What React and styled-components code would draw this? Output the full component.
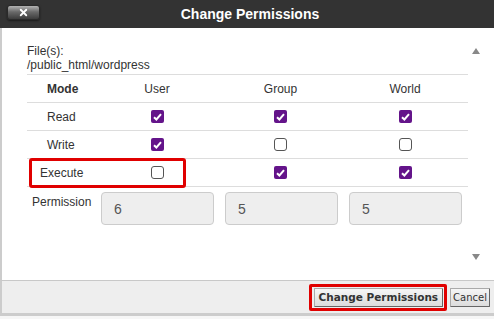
import React from 'react';
import styled, { createGlobalStyle } from 'styled-components';
import { X } from 'lucide-react';

const GlobalStyle = createGlobalStyle`
    body {
        margin: 0;
        background: #f6f6f6;
        font-family: "Liberation Sans", Arial, sans-serif;
    }
`;

// Whole dialog window
const Dialog = styled.div`
    width: 494px;
    height: 316px;
    display: flex;
    flex-direction: column;
`;

// Dark title bar
const TitleBar = styled.div`
    height: 28px;
    flex: 0 0 28px;
    background: #333;
    display: grid;
    grid-template-columns: 1fr auto 1fr;
    align-items: center;
`;

const CloseButton = styled.button`
    justify-self: start;
    margin: 0 0 4px 7px;
    width: 33px;
    height: 15px;
    padding: 0;
    border: 1px solid #2a2a2a;
    border-radius: 3px;
    background: linear-gradient(#b4b4b4, #6a6a6a 45%, #3c3c3c);
    box-shadow: 0 1px 2px rgba(0, 0, 0, 0.5);
    display: flex;
    align-items: center;
    justify-content: center;
    color: #fff;
`;

const Title = styled.h1`
    margin: 0 0 0 6px;
    font-size: 14px;
    font-weight: bold;
    color: #fff;
    font-family: "Liberation Sans", Arial, sans-serif;
`;

// White scrolling body
const Body = styled.div`
    flex: 1;
    display: flex;
    background: #fff;
    border-left: 2px solid #ccc;
`;

const Content = styled.div`
    width: 441px;
    padding: 16px 0 0 25px;
    color: #333;
    font-size: 12px;
`;

const FileLine = styled.div`
    line-height: 14px;
`;

const Scroller = styled.div`
    flex: 1;
    display: flex;
    flex-direction: column;
    justify-content: space-between;
    padding: 20px 0 20px 4px;
`;

const Arrow = styled.span`
    width: 0;
    height: 0;
    border-left: 4.5px solid transparent;
    border-right: 4.5px solid transparent;
    ${(p) => (p.$down ? 'border-top: 6px solid #888;' : 'border-bottom: 6px solid #888;')}
`;

// Permission table
const Table = styled.div`
    margin-top: 2px;
    border-top: 1px solid #ddd;
`;

const Row = styled.div`
    position: relative;
    display: grid;
    grid-template-columns: 68px 124px 123px 126px;
    height: 27px;
    align-items: center;
    border-bottom: 1px solid #ddd;
`;

const Label = styled.div`
    padding-left: ${(p) => p.$indent || 20}px;
    font-weight: ${(p) => (p.$bold ? 'bold' : 'normal')};
`;

const Cell = styled.div`
    display: flex;
    justify-content: center;
`;

const Box = styled.span`
    width: 13px;
    height: 13px;
    box-sizing: border-box;
    border-radius: ${(p) => (p.$checked ? '2px' : '3px')};
    background: ${(p) => (p.$checked ? '#64148a' : '#fff')};
    border: ${(p) => (p.$checked ? 'none' : '1px solid #555')};
    display: flex;
    align-items: center;
    justify-content: center;
`;

// Red annotation frame
const Highlight = styled.span`
    position: absolute;
    left: 2px;
    top: -1px;
    width: 157px;
    height: 30px;
    box-sizing: border-box;
    border: 3px solid #e00000;
    border-radius: 3px;
    pointer-events: none;
`;

const PermRow = styled.div`
    display: grid;
    grid-template-columns: 63px repeat(3, 113px);
    column-gap: 11px;
    margin-top: 5px;
`;

const PermLabel = styled.div`
    padding: 3px 0 0 5px;
`;

const PermInput = styled.input`
    height: 33px;
    box-sizing: border-box;
    width: 100%;
    padding: 0 0 0 12px;
    background: #eee;
    border: 1px solid #ccc;
    border-radius: 4px;
    font-family: "Liberation Sans", Arial, sans-serif;
    font-size: 14px;
    color: #555;
    outline: none;
`;

// Button bar at the bottom
const Footer = styled.div`
    height: 32px;
    display: flex;
    justify-content: flex-end;
    align-items: center;
    gap: 3px;
    padding-right: 4px;
    background: #eee;
    border-left: 2px solid #ccc;
    border-top: 1px solid #c8c8c8;
    border-bottom: 3px solid #ccc;
`;

const Marked = styled.span`
    display: flex;
    padding: 1px 1px 1px 2px;
    border: 3px solid #e00000;
    border-radius: 2px;
`;

const Button = styled.button`
    height: 19px;
    padding: 0 ${(p) => (p.$primary ? 4 : 2)}px;
    font-family: "DejaVu Sans", Verdana, sans-serif;
    font-size: ${(p) => (p.$primary ? 10.5 : 10)}px;
    font-weight: ${(p) => (p.$primary ? 'bold' : 'normal')};
    color: #333;
    background: linear-gradient(#f6f6f6, #dcdcdc);
    border: 1px solid #aaa;
    border-right-color: #666;
    border-bottom-color: #666;
    border-radius: 1px;
`;

const Check = () => (
    <svg width="9" height="8" viewBox="0 0 9 8">
        <path d="M1 4.2 L3.4 6.5 L8 1.2" fill="none" stroke="#fff" strokeWidth="2" />
    </svg>
);

const rows = [
    { name: 'Read', perms: [true, true, true] },
    { name: 'Write', perms: [true, false, false] },
    { name: 'Execute', perms: [false, true, true], marked: true },
];

function App() {
    return (
        <Dialog>
            <GlobalStyle />
            <TitleBar>
                <CloseButton aria-label="close"><X size={11} strokeWidth={4} /></CloseButton>
                <Title>Change Permissions</Title>
            </TitleBar>
            <Body>
                <Content>
                    <FileLine>File(s):</FileLine>
                    <FileLine>/public_html/wordpress</FileLine>
                    <Table>
                        <Row>
                            <Label $bold>Mode</Label>
                            <Cell>User</Cell>
                            <Cell>Group</Cell>
                            <Cell>World</Cell>
                        </Row>
                        {rows.map((r) => (
                            <Row key={r.name}>
                                <Label $indent={r.marked ? 13 : 20}>{r.name}</Label>
                                {r.perms.map((on, i) => (
                                    <Cell key={i}>
                                        <Box $checked={on}>{on && <Check />}</Box>
                                    </Cell>
                                ))}
                                {r.marked && <Highlight />}
                            </Row>
                        ))}
                    </Table>
                    <PermRow>
                        <PermLabel>Permission</PermLabel>
                        <PermInput readOnly value="6" />
                        <PermInput readOnly value="5" />
                        <PermInput readOnly value="5" />
                    </PermRow>
                </Content>
                <Scroller>
                    <Arrow />
                    <Arrow $down />
                </Scroller>
            </Body>
            <Footer>
                <Marked>
                    <Button $primary>Change Permissions</Button>
                </Marked>
                <Button>Cancel</Button>
            </Footer>
        </Dialog>
    );
}

export default App;
